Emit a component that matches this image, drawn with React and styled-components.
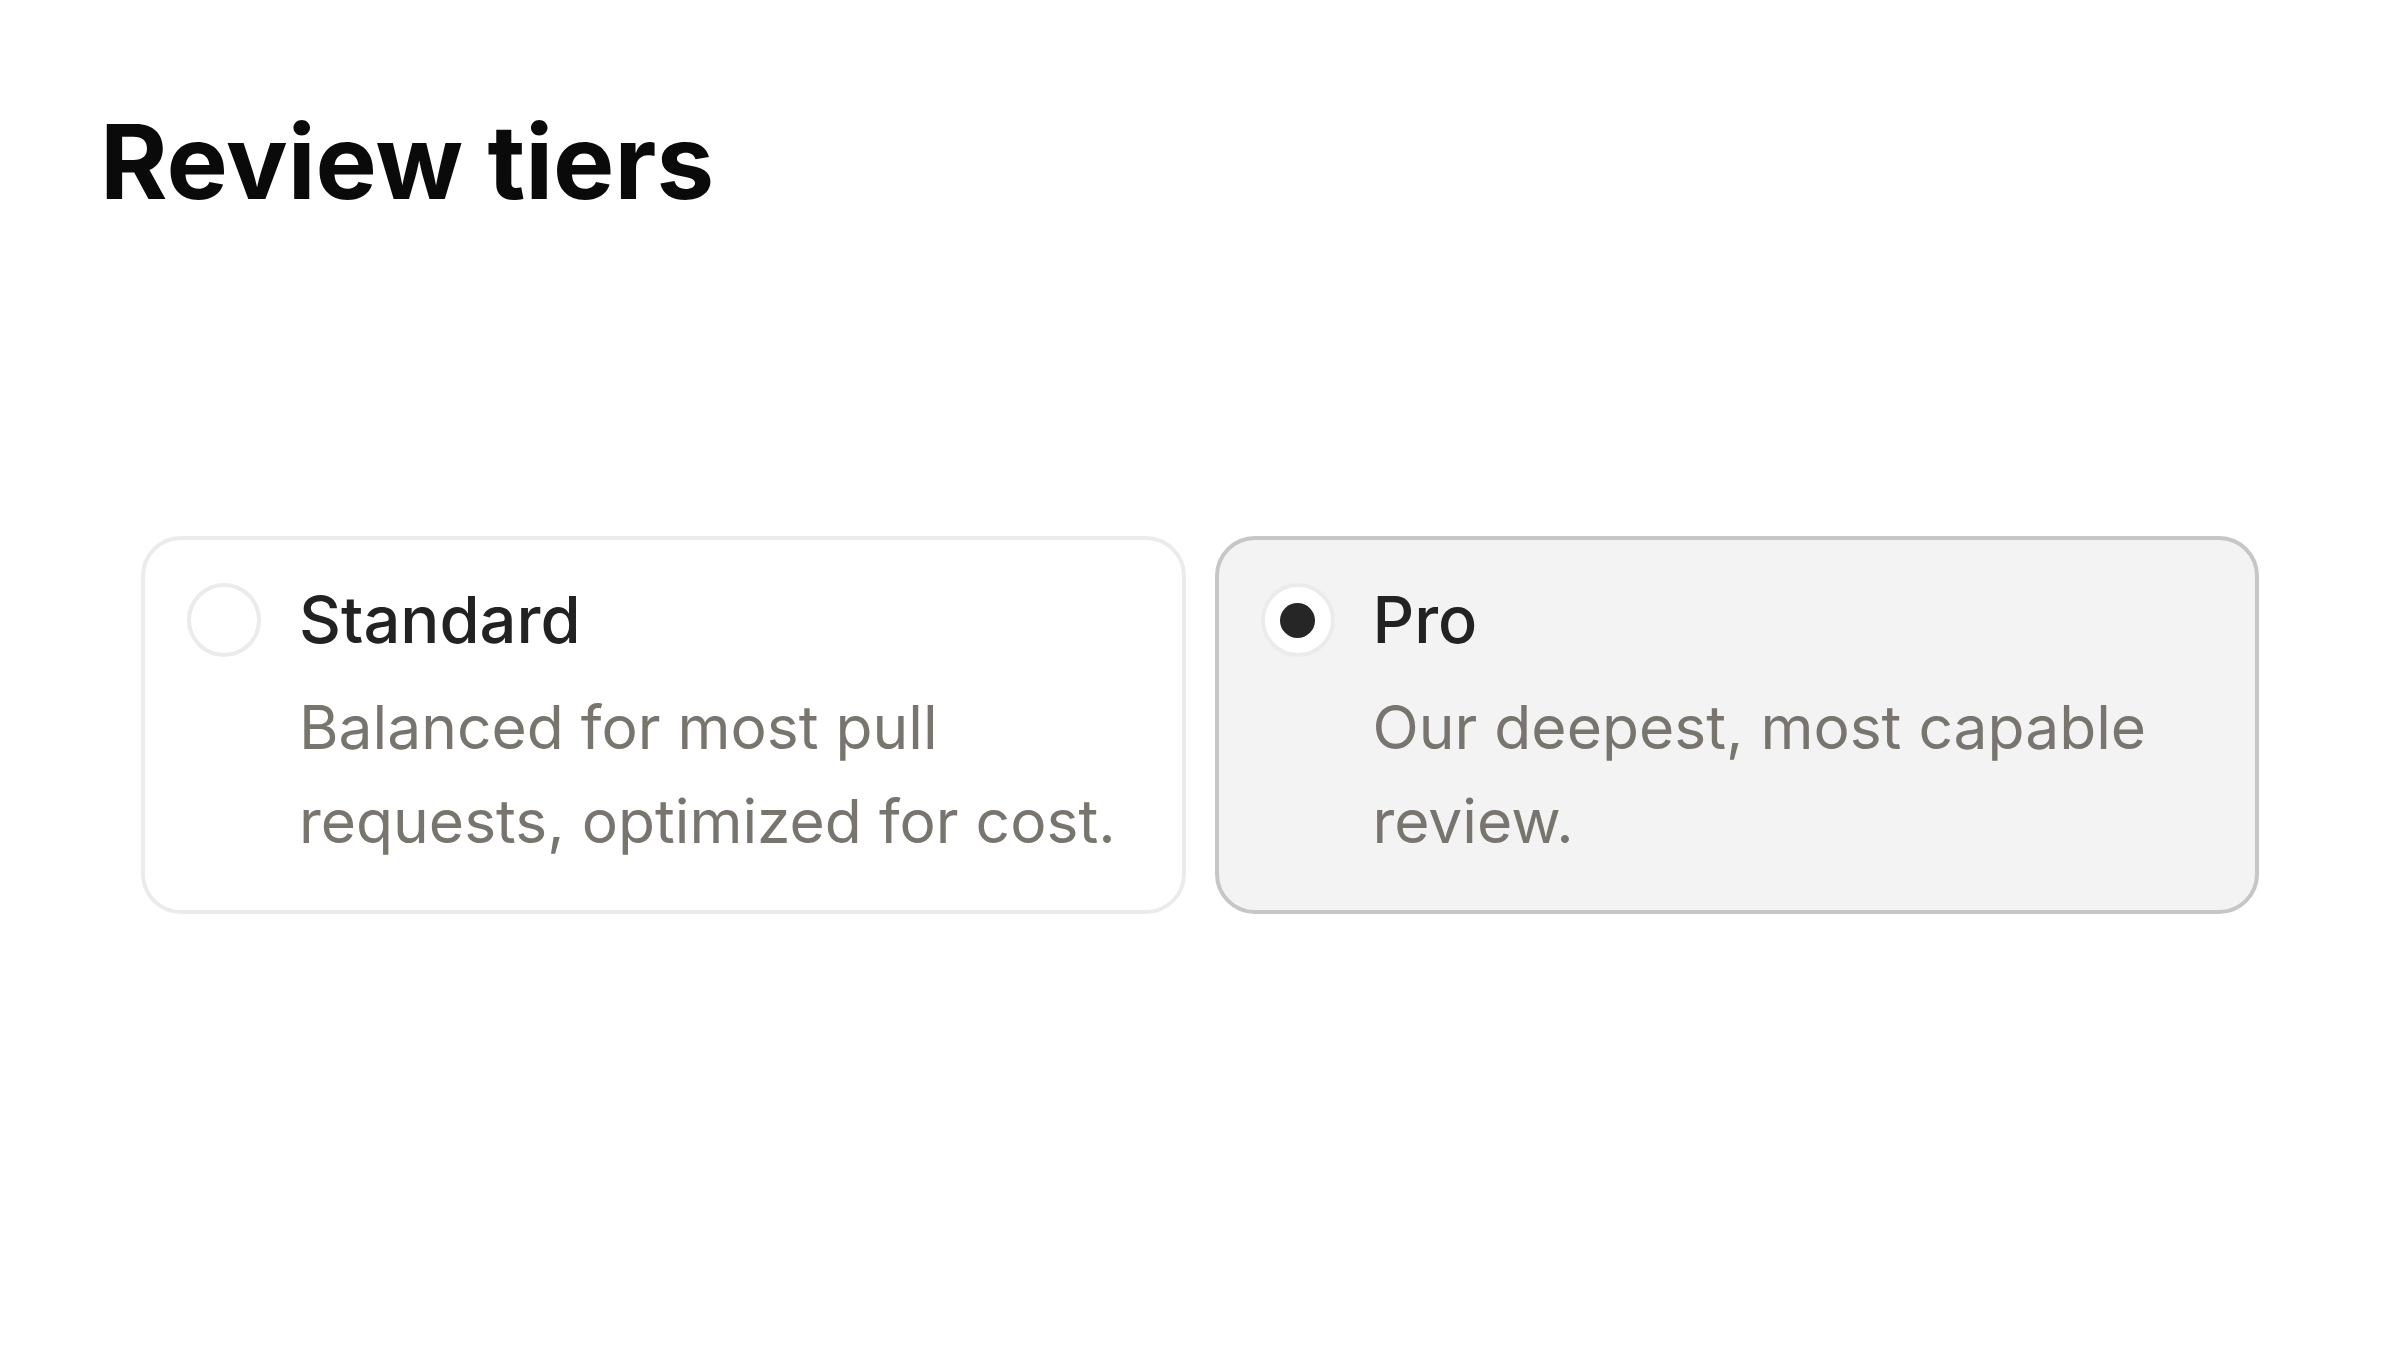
import React, { useState } from 'react';
import styled, { createGlobalStyle } from 'styled-components';

const GlobalStyle = createGlobalStyle`
  html, body {
    margin: 0;
    background: #ffffff;
  }
  body {
    font-family: Inter, "Noto Sans", sans-serif;
    -webkit-font-smoothing: antialiased;
  }
`;

const Page = styled.main`
  box-sizing: border-box;
  min-height: 1350px;
  padding-top: 100px;
`;

const Heading = styled.h1`
  margin: 0 0 312px 100px;
  font-size: 103px;
  line-height: 124px;
  font-weight: 700;
  color: #0a0a0a;
`;

const TierList = styled.div`
  display: grid;
  grid-template-columns: 1fr 1fr;
  gap: 29px;
  padding: 0 141px;
`;

const TierCard = styled.label`
  display: flex;
  gap: 38px;
  box-sizing: border-box;
  padding: 43px 42px 42px;
  border: 4px solid ${(p) => (p.$selected ? '#c6c6c6' : '#ebebeb')};
  border-radius: 40px;
  background: ${(p) => (p.$selected ? '#f3f3f3' : '#ffffff')};
  cursor: pointer;
`;

const Radio = styled.span`
  flex: none;
  display: flex;
  align-items: center;
  justify-content: center;
  box-sizing: border-box;
  width: 74px;
  height: 74px;
  border: 4px solid #ebebeb;
  border-radius: 50%;
  background: #ffffff;

  &::after {
    content: '';
    display: ${(p) => (p.$checked ? 'block' : 'none')};
    width: 35px;
    height: 35px;
    border-radius: 50%;
    background: #262626;
  }
`;

const TierBody = styled.div`
  flex: 1;
  min-width: 0;
`;

const TierName = styled.div`
  font-size: 65px;
  line-height: 74px;
  font-weight: 500;
  color: #222222;
`;

const TierText = styled.p`
  margin: 23px 0 0;
  font-size: 60.5px;
  line-height: 94px;
  font-weight: 400;
  color: #78756f;
`;

const tiers = [
  {
    id: 'standard',
    name: 'Standard',
    text: 'Balanced for most pull requests, optimized for cost.',
  },
  {
    id: 'pro',
    name: 'Pro',
    text: 'Our deepest, most capable review.',
  },
];

export default function App() {
  const [tier, setTier] = useState('pro');

  return (
    <Page>
      <GlobalStyle />
      <Heading>Review tiers</Heading>
      <TierList role="radiogroup">
        {tiers.map((t) => (
          <TierCard
            key={t.id}
            $selected={tier === t.id}
            onClick={() => setTier(t.id)}
          >
            <Radio role="radio" aria-checked={tier === t.id} $checked={tier === t.id} />
            <TierBody>
              <TierName>{t.name}</TierName>
              <TierText>{t.text}</TierText>
            </TierBody>
          </TierCard>
        ))}
      </TierList>
    </Page>
  );
}
